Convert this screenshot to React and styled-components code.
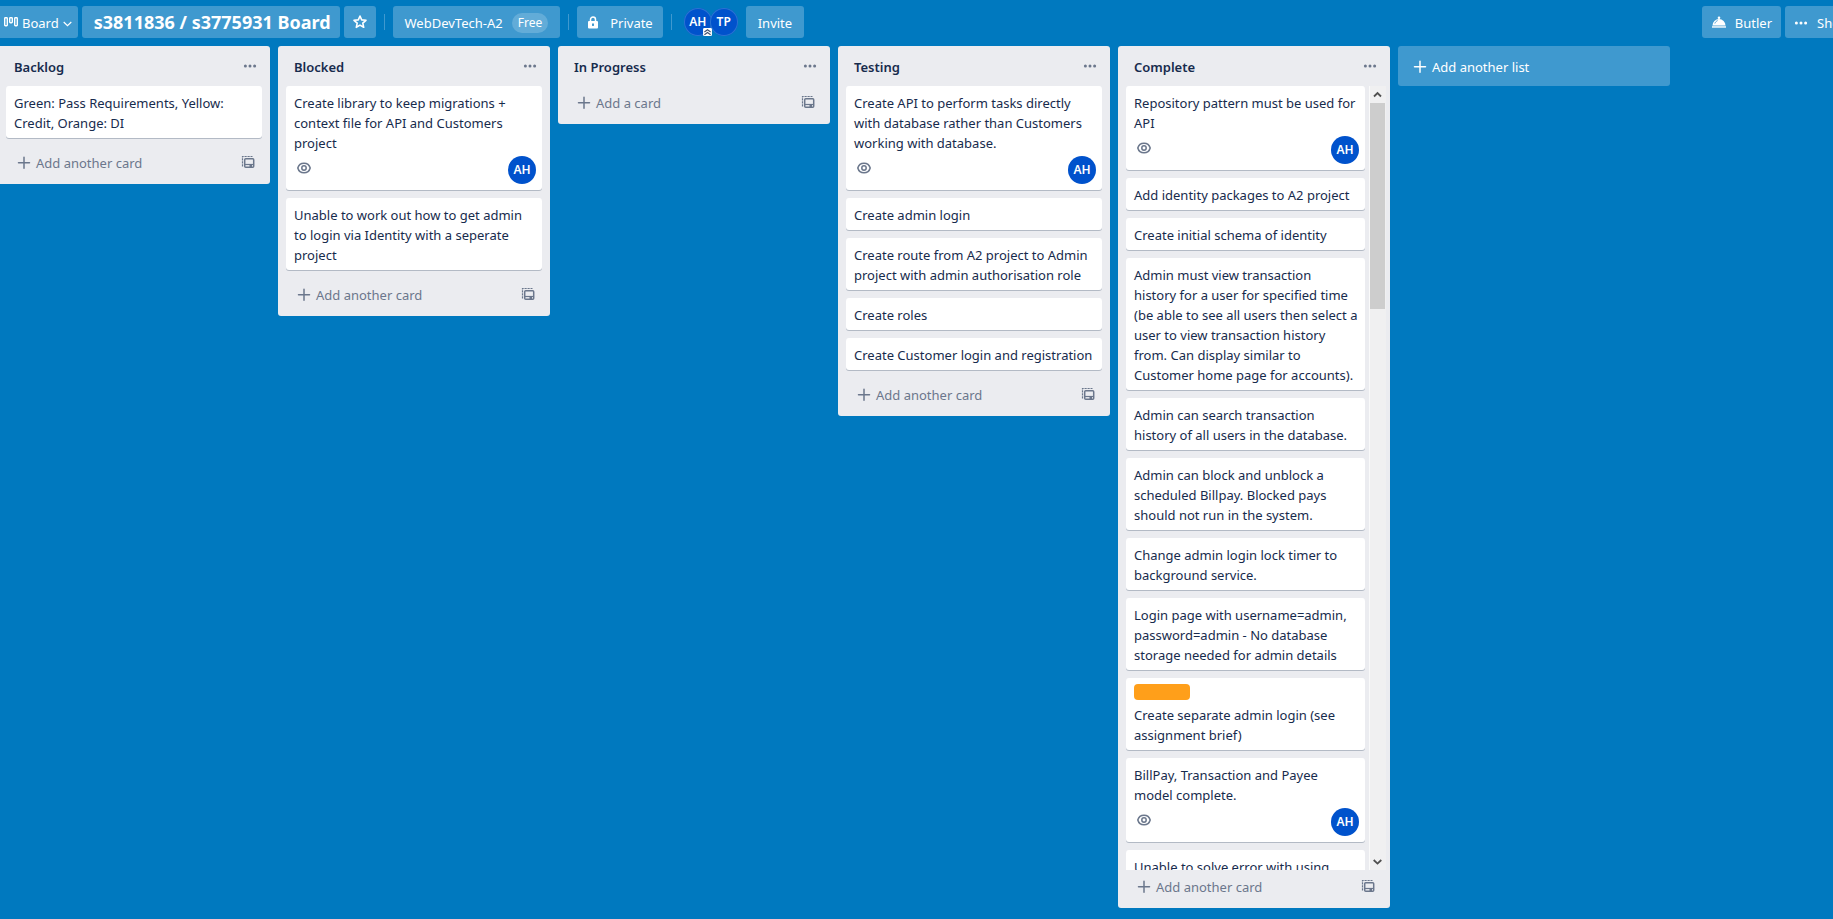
import React from 'react';
import styled, { createGlobalStyle } from 'styled-components';

const GlobalStyle = createGlobalStyle`
  *, *::before, *::after { box-sizing: border-box; }
  html, body, #root { height: 100%; }
  body {
    margin: 0;
    overflow: hidden;
    background: #0079bf;
    color: #172b4d;
    font-family: "Noto Sans", "Segoe UI", sans-serif;
    font-size: 13px;
    line-height: 20px;
  }
  button {
    border: 0;
    padding: 0;
    margin: 0;
    background: none;
    color: inherit;
    font: inherit;
    cursor: pointer;
  }
  svg { display: block; flex: none; }
`;

const Page = styled.main`
  display: flex;
  flex-direction: column;
  height: 100%;
  overflow: hidden;
`;

const Header = styled.header`
  display: flex;
  flex: none;
  align-items: center;
  padding: 6px 0 8px;
  height: 46px;
  color: #fff;
`;

const HeaderButton = styled.button`
  display: flex;
  flex: none;
  align-items: center;
  justify-content: center;
  gap: ${(p) => p.$gap || 4}px;
  height: 32px;
  padding: 2px ${(p) => p.$pad || 12}px 0;
  margin-right: 4px;
  border-radius: 3px;
  background: #3f99cf;
  white-space: nowrap;
`;

const ViewButton = styled(HeaderButton)`
  padding: 2px 6px 0 4px;
  border-radius: 0 3px 3px 0;
`;

const StarButton = styled(HeaderButton)`
  width: 32px;
  padding: 0;
`;

const BoardTitle = styled.h1`
  flex: none;
  margin: 0 4px 0 0;
  padding: 1px 9px 0 12px;
  height: 32px;
  border-radius: 3px;
  background: #3f99cf;
  font-size: 18px;
  font-weight: 700;
  line-height: 31px;
  white-space: nowrap;
`;

const Divider = styled.span`
  flex: none;
  width: 1px;
  height: 16px;
  margin: 0 8px 0 4px;
  background: #3f99cf;
`;

const PlanPill = styled.span`
  margin-left: 5px;
  padding: 0 6px;
  border-radius: 20px;
  background: #62acd8;
  font-size: 12px;
`;

const Members = styled.div`
  display: flex;
  flex: none;
  margin: 0 8px 0 4px;
`;

const Avatar = styled.span`
  position: relative;
  display: flex;
  flex: none;
  align-items: center;
  justify-content: center;
  width: 28px;
  height: 28px;
  border-radius: 50%;
  background: #0052cc;
  color: #fff;
  font-size: 12px;
  font-weight: 600;
`;

const HeaderAvatar = styled(Avatar)`
  box-shadow: inset 0 0 0 1px #2a74d2;
  & + & { margin-left: -2px; }
`;

const AdminBadge = styled.svg`
  position: absolute;
  right: 0;
  bottom: 0;
  z-index: 1;
`;

const Spacer = styled.div`
  flex: 1;
`;

const ClippedEnd = styled.div`
  flex: none;
  width: 48px;
  overflow: hidden;
`;

const Board = styled.div`
  display: flex;
  flex: 1;
  align-items: flex-start;
  gap: 8px;
  min-height: 0;
  margin-left: -2px;
  padding-bottom: 11px;
`;

const List = styled.section`
  display: flex;
  flex: none;
  flex-direction: column;
  width: 272px;
  max-height: 100%;
  border-radius: 3px;
  background: #ebecf0;
`;

const ListHeader = styled.header`
  display: flex;
  flex: none;
  align-items: center;
  justify-content: space-between;
  height: 40px;
  padding: 0 4px 0 16px;
`;

const ListTitle = styled.h2`
  margin: 0;
  padding-top: 2px;
  font-size: 13px;
  font-weight: 600;
  line-height: 20px;
`;

const MenuButton = styled.button`
  display: flex;
  align-items: center;
  justify-content: center;
  width: 32px;
  height: 32px;
  color: #6b778c;
`;

const ListBody = styled.div`
  display: flex;
  min-height: 0;
  padding: 0 ${(p) => (p.$scroll ? 4 : 8)}px 0 8px;
`;

const Cards = styled.div`
  display: flex;
  flex: 1;
  flex-direction: column;
  gap: 8px;
  min-width: 0;
  padding-bottom: ${(p) => (p.$scroll ? 0 : 8)}px;
  padding-right: ${(p) => (p.$scroll ? 4 : 0)}px;
  overflow-y: ${(p) => (p.$scroll ? 'auto' : 'visible')};
  scrollbar-width: none;
`;

const Card = styled.article`
  flex: none;
  padding: 7px 6px 5px 8px;
  border-radius: 3px;
  background: #fff;
  box-shadow: 0 1px 0 #b3bac5;
`;

const CardText = styled.p`
  margin: 0;
  white-space: pre-line;
`;

const Label = styled.div`
  width: 56px;
  height: 16px;
  margin: -1px 0 5px;
  border-radius: 4px;
  background: #ff9f1a;
`;

const CardFooter = styled.div`
  display: flex;
  align-items: center;
  justify-content: space-between;
  height: 32px;
  padding: 2px 0 0 2px;
  color: #6b778c;
`;

const Watching = styled.span`
  padding-bottom: 4px;
`;

const Scrollbar = styled.div`
  display: flex;
  flex: none;
  flex-direction: column;
  width: 17px;
  padding-right: 1px;
  background: #f0f0f1;
  border-left: 1px solid #fafafa;
`;

const ScrollArrow = styled.button`
  display: flex;
  flex: none;
  align-items: center;
  justify-content: center;
  height: 17px;
  color: #505050;
`;

const ScrollTrack = styled.div`
  flex: 1;
`;

const ScrollThumb = styled.div`
  height: 206px;
  background: #cdcdcd;
`;

const ListFooter = styled.footer`
  display: flex;
  flex: none;
  align-items: center;
  justify-content: space-between;
  height: 38px;
  padding: 0 15px 4px 18px;
  color: #6b778c;
`;

const AddCard = styled.button`
  display: flex;
  align-items: center;
  gap: 4px;
  color: #6b778c;
`;

const TemplateButton = styled.button`
  padding-bottom: 2px;
  color: #6b778c;
`;

const AddList = styled.button`
  display: flex;
  flex: none;
  align-items: center;
  gap: 4px;
  width: 272px;
  height: 40px;
  padding: 2px 14px 0;
  border-radius: 3px;
  background: #3f99cf;
  color: #fff;
`;

const Dots = () => (
  <svg width="14" height="4" viewBox="0 0 14 4" fill="currentColor" aria-hidden="true">
    <circle cx="2.4" cy="2" r="1.5" />
    <circle cx="7" cy="2" r="1.5" />
    <circle cx="11.6" cy="2" r="1.5" />
  </svg>
);

const Plus = () => (
  <svg width="16" height="16" viewBox="0 0 16 16" fill="none" stroke="currentColor" strokeWidth="1.5" strokeLinecap="round" aria-hidden="true">
    <path d="M8 2.2v11M2.5 7.7h11" />
  </svg>
);

const Eye = () => (
  <svg width="16" height="16" viewBox="0 0 16 16" fill="none" stroke="currentColor" strokeWidth="1.5" aria-hidden="true">
    <path d="M1.8 8C2.6 5 5 3.2 8 3.2S13.4 5 14.2 8C13.4 11 11 12.8 8 12.8S2.6 11 1.8 8Z" />
    <circle cx="8" cy="8" r="2.2" />
  </svg>
);

const Template = () => (
  <svg width="14" height="14" viewBox="0 0 14 14" fill="none" stroke="currentColor" aria-hidden="true">
    <path d="M1.5 11.500V1.500H11.500" strokeWidth="1.200" strokeDasharray="2.200 0.800" />
    <rect x="3.700" y="3.700" width="9" height="8.600" rx="1" strokeWidth="1.500" />
    <path d="M4 9.500h8.500" strokeWidth="1.200" />
    <path d="M8.500 9.500v2.500h2.500v-2.500Z" fill="currentColor" stroke="none" />
  </svg>
);

const BoardIcon = () => (
  <svg width="14" height="14" viewBox="0 0 14 14" fill="none" stroke="currentColor" strokeWidth="1.4" aria-hidden="true">
    <rect x="0.7" y="1.7" width="2.6" height="8" rx="0.7" />
    <rect x="5.7" y="1.7" width="2.6" height="5" rx="0.7" />
    <rect x="10.7" y="1.7" width="2.6" height="8" rx="0.7" />
  </svg>
);

const Chevron = ({ up, weight = 1.2 }) => (
  <svg width="9" height="9" viewBox="0 0 9 9" fill="none" stroke="currentColor" strokeWidth={weight} aria-hidden="true">
    <path d={up ? 'M1 6.5L4.5 3L8 6.5' : 'M0.7 3L4.5 6.6L8.3 3'} />
  </svg>
);

const Star = () => (
  <svg width="16" height="16" viewBox="0 0 16 16" fill="none" stroke="currentColor" strokeWidth="1.6" strokeLinejoin="round" aria-hidden="true">
    <path d="M8 2l1.7 3.9 4.3.4-3.2 2.8.9 4.2L8 11.1l-3.700 2.200.9-4.200L2 6.300l4.300-.4Z" />
  </svg>
);

const Lock = () => (
  <svg width="12" height="14" viewBox="0 0 12 14" aria-hidden="true">
    <path d="M3.5 5.5V3.6a2.5 2.5 0 0 1 5 0v1.9" fill="none" stroke="currentColor" strokeWidth="1.5" />
    <rect x="1" y="5" width="10" height="7.4" rx="1" fill="currentColor" />
    <rect x="5" y="7.5" width="2" height="2.4" fill="#3f99cf" />
  </svg>
);

const Bell = () => (
  <svg width="16" height="14" viewBox="0 0 16 14" fill="currentColor" aria-hidden="true">
    <circle cx="8" cy="1.8" r="1.3" />
    <path d="M1.5 9.5a6.5 6.5 0 0 1 13 0Z" />
    <path d="M3.9 7.5c.4-1.4 1.3-2.3 2.7-2.9" fill="none" stroke="#3f99cf" strokeWidth="0.9" />
    <path d="M1 9.9h14v2H1Z" opacity="0.75" />
  </svg>
);

const lists = [
  {
    title: 'Backlog',
    cards: [{ text: 'Green: Pass Requirements, Yellow: Credit, Orange: DI' }],
  },
  {
    title: 'Blocked',
    cards: [
      { text: 'Create library to keep migrations + context file for API and Customers project', member: 'AH' },
      { text: 'Unable to work out how to get admin to login via Identity with a seperate project' },
    ],
  },
  { title: 'In Progress', cards: [] },
  {
    title: 'Testing',
    cards: [
      { text: 'Create API to perform tasks directly with database rather than Customers working with database.', member: 'AH' },
      { text: 'Create admin login' },
      { text: 'Create route from A2 project to Admin project with admin authorisation role' },
      { text: 'Create roles' },
      { text: 'Create Customer login and registration' },
    ],
  },
  {
    title: 'Complete',
    scroll: true,
    cards: [
      { text: 'Repository pattern must be used for API', member: 'AH' },
      { text: 'Add identity packages to A2 project' },
      { text: 'Create initial schema of identity' },
      { text: 'Admin must view transaction\nhistory for a user for specified time\n(be able to see all users then select a user to view transaction history\nfrom. Can display similar to\nCustomer home page for accounts).' },
      { text: 'Admin can search transaction history of all users in the database.' },
      { text: 'Admin can block and unblock a scheduled Billpay. Blocked pays should not run in the system.' },
      { text: 'Change admin login lock timer to background service.' },
      { text: 'Login page with username=admin, password=admin - No database storage needed for admin details' },
      { text: 'Create separate admin login (see assignment brief)', label: true },
      { text: 'BillPay, Transaction and Payee model complete.', member: 'AH' },
      { text: 'Unable to solve error with using' },
    ],
  },
];

function BoardCard({ text, member, label }) {
  return (
    <Card>
      {label && <Label />}
      <CardText>{text}</CardText>
      {member && (
        <CardFooter>
          <Watching><Eye /></Watching>
          <Avatar>{member}</Avatar>
        </CardFooter>
      )}
    </Card>
  );
}

function BoardList({ title, cards, scroll }) {
  return (
    <List>
      <ListHeader>
        <ListTitle>{title}</ListTitle>
        <MenuButton aria-label="List actions"><Dots /></MenuButton>
      </ListHeader>
      {cards.length > 0 && (
        <ListBody $scroll={scroll}>
          <Cards $scroll={scroll}>
            {cards.map((card) => <BoardCard key={card.text} {...card} />)}
          </Cards>
          {scroll && (
            <Scrollbar>
              <ScrollArrow aria-label="Scroll up"><Chevron up weight={1.8} /></ScrollArrow>
              <ScrollTrack><ScrollThumb /></ScrollTrack>
              <ScrollArrow aria-label="Scroll down"><Chevron weight={1.8} /></ScrollArrow>
            </Scrollbar>
          )}
        </ListBody>
      )}
      <ListFooter>
        <AddCard><Plus />{cards.length ? 'Add another card' : 'Add a card'}</AddCard>
        <TemplateButton aria-label="Create from template"><Template /></TemplateButton>
      </ListFooter>
    </List>
  );
}

export default function App() {
  return (
    <Page>
      <GlobalStyle />
      <Header>
        <ViewButton><BoardIcon />Board<Chevron /></ViewButton>
        <BoardTitle>s3811836 / s3775931 Board</BoardTitle>
        <StarButton aria-label="Star board"><Star /></StarButton>
        <Divider />
        <HeaderButton>WebDevTech-A2<PlanPill>Free</PlanPill></HeaderButton>
        <Divider />
        <HeaderButton $pad={10} $gap={11}><Lock />Private</HeaderButton>
        <Divider />
        <Members>
          <HeaderAvatar>
            AH
            <AdminBadge width="9" height="8" viewBox="0 0 10 9" aria-hidden="true">
              <rect width="10" height="9" rx="1.5" fill="#fff" />
              <path d="M1.5 4.500L5 2l3.500 2.500M1.500 7.500L5 5l3.500 2.500" fill="none" stroke="#42526e" strokeWidth="1.300" />
            </AdminBadge>
          </HeaderAvatar>
          <HeaderAvatar>TP</HeaderAvatar>
        </Members>
        <HeaderButton>Invite</HeaderButton>
        <Spacer />
        <HeaderButton $pad={9} $gap={8}><Bell />Butler</HeaderButton>
        <ClippedEnd>
          <HeaderButton $pad={9} $gap={9}><Dots />Show Menu</HeaderButton>
        </ClippedEnd>
      </Header>
      <Board>
        {lists.map((list) => <BoardList key={list.title} {...list} />)}
        <AddList><Plus />Add another list</AddList>
      </Board>
    </Page>
  );
}
